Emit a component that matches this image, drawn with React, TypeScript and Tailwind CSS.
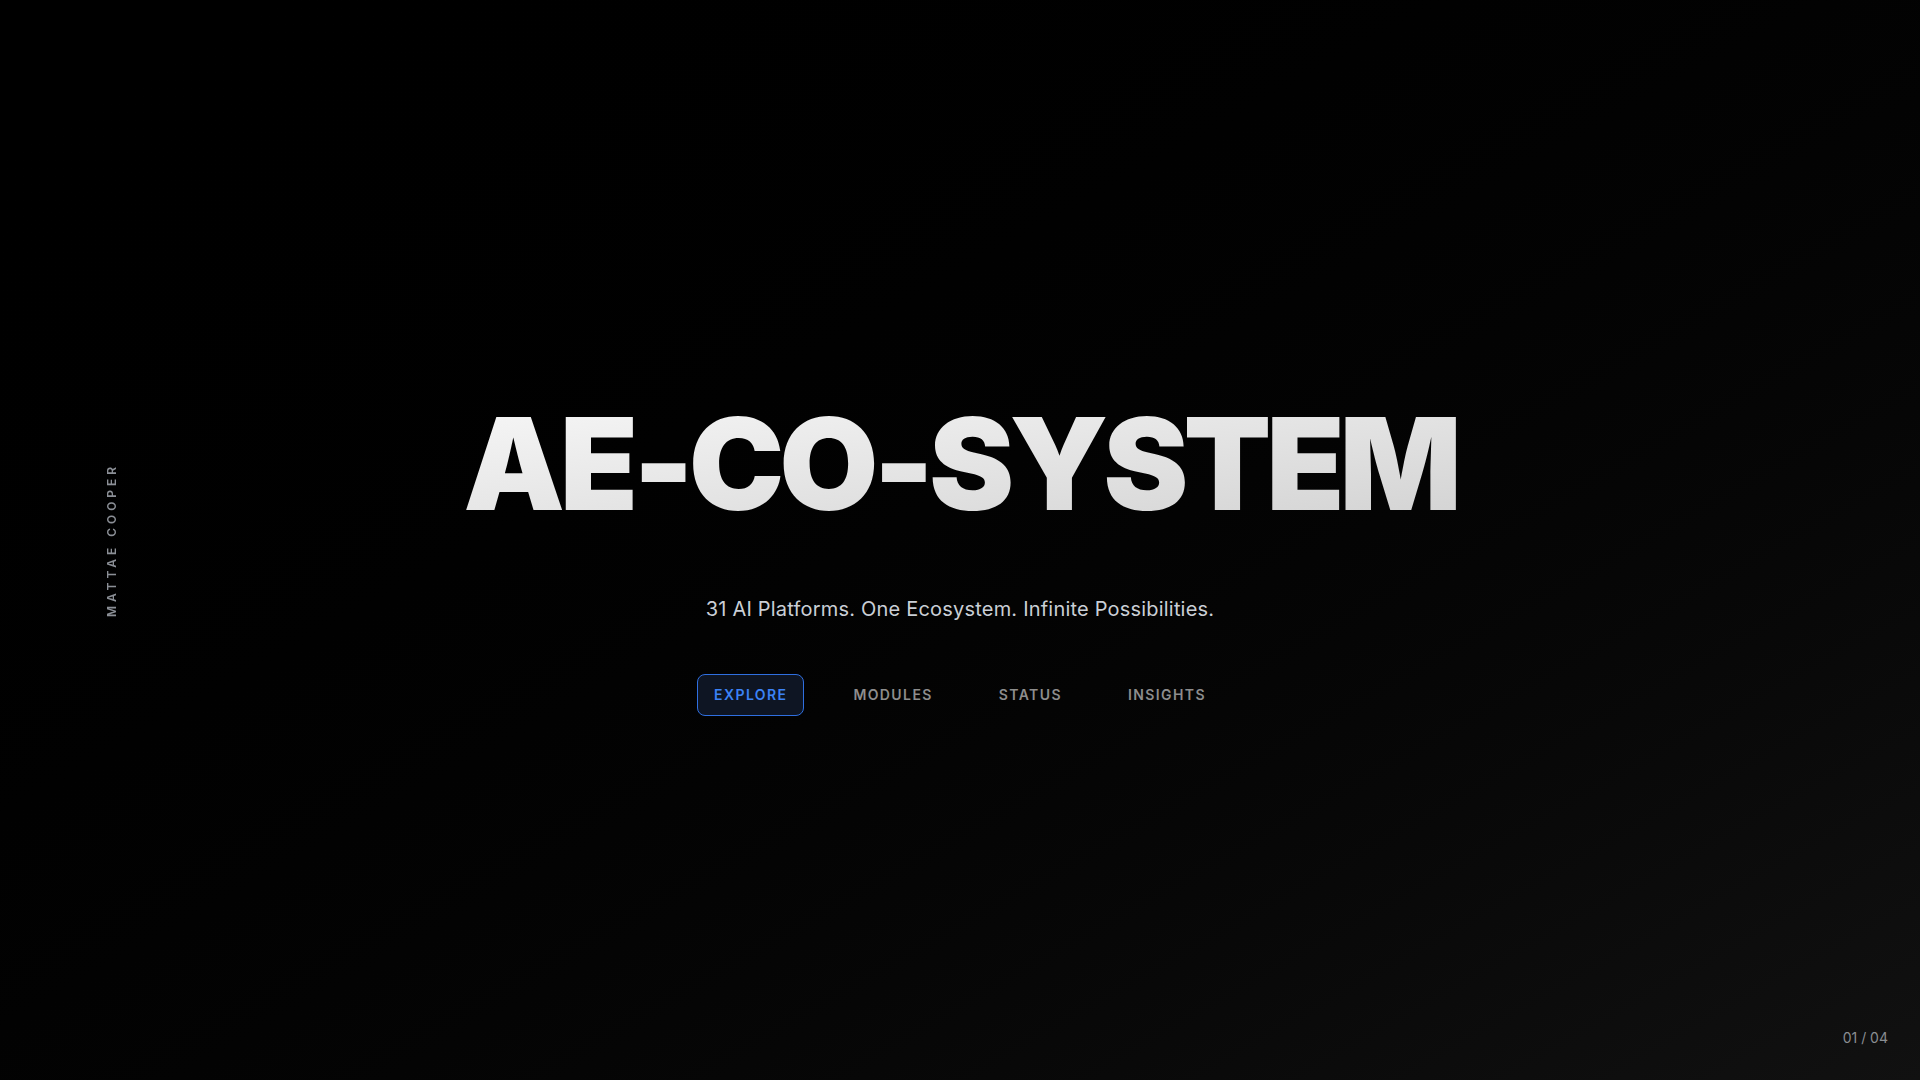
const navItems = ["EXPLORE", "MODULES", "STATUS", "INSIGHTS"];

export default function App() {
  const active = "EXPLORE";

  return (
    <div className="relative flex min-h-screen w-full items-center justify-center overflow-hidden bg-linear-to-br from-black to-[#111111] font-['Inter',sans-serif]">
      <aside className="absolute left-[104px] top-1/2 -translate-y-1/2">
        <span className="block rotate-180 text-xs font-semibold tracking-[0.33em] text-[#8b8f96] [writing-mode:vertical-rl]">
          MATTAE COOPER
        </span>
      </aside>

      <main className="flex flex-col items-center pt-9 text-center">
        <h1 className="bg-linear-to-br from-[#f7f7f7] to-[#d2d2d2] bg-clip-text text-[128px] leading-none font-black tracking-[-0.04em] text-transparent">
          AE-CO-SYSTEM
        </h1>
        <p className="mt-[67px] text-xl tracking-[0.01em] text-[#cacfd6]">31 AI Platforms. One Ecosystem. Infinite Possibilities.</p>

        <nav className="mt-[51px] flex items-center gap-8">
          {navItems.map((item) => (
            <button
              key={item}
              type="button"
              className={
                item === active
                  ? "rounded-lg border border-[#2f6fe0] bg-[#0e1523] px-4 py-2.5 text-sm font-semibold tracking-widest text-[#3b82f6]"
                  : "rounded-lg border border-transparent px-4 py-2.5 text-sm font-semibold tracking-widest text-[#8d8d8d] hover:text-white"
              }
            >
              {item}
            </button>
          ))}
        </nav>
      </main>

      <div className="absolute bottom-8 right-8 text-sm text-[#8a8d92]">01 / 04</div>
    </div>
  );
}
